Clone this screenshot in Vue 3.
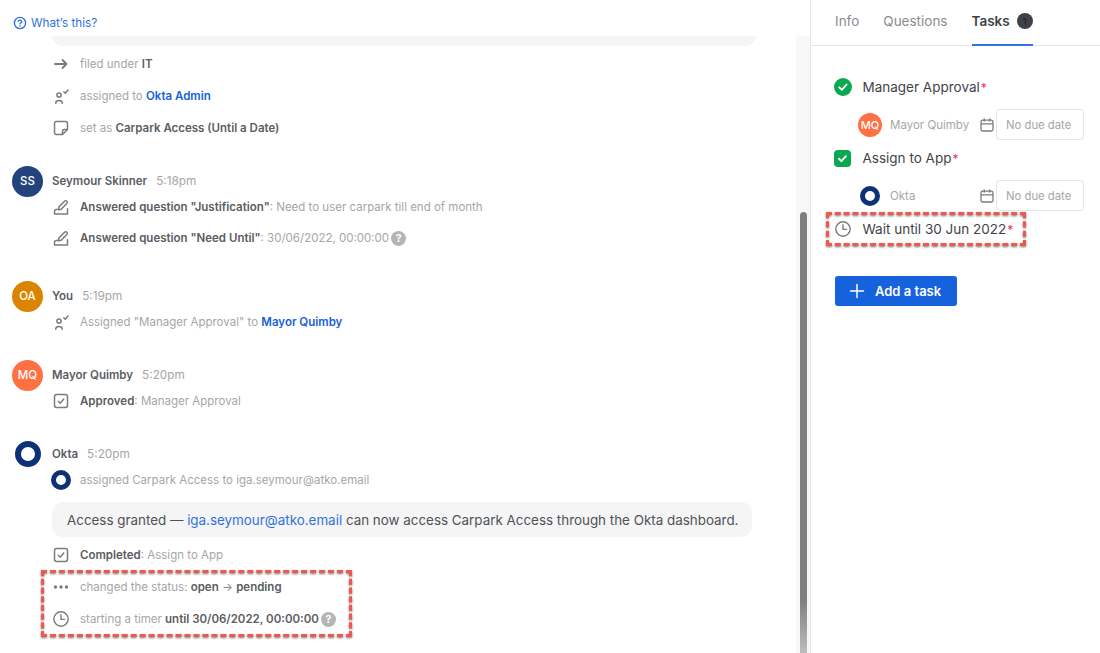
<script setup>
const tabs = [
  { label: 'Info', active: false },
  { label: 'Questions', active: false },
  { label: 'Tasks', active: true }
]
</script>

<template>
  <div class="app">
    <svg class="defs" aria-hidden="true">
      <symbol id="i-arrow" viewBox="0 0 18 18"><path d="M3 9h11.500M10.500 5l4 4-4 4" fill="none" stroke="currentColor" stroke-width="1.800" stroke-linecap="round" stroke-linejoin="round"/></symbol>
      <symbol id="i-assign" viewBox="0 0 18 18"><g fill="none" stroke="currentColor" stroke-linecap="round" stroke-linejoin="round" stroke-width="1.500"><circle cx="7" cy="8" r="2.100"/><path d="M3.800 16.200v-.4c0-1.500 1.400-2.400 3.200-2.400s3.200.9 3.200 2.400v.4M11.800 4.700l1.500 1.500 2.700-3.200"/></g></symbol>
      <symbol id="i-note" viewBox="0 0 18 18"><path d="M2.500 4.200c0-1 .8-1.700 1.700-1.700h9.600c1 0 1.700.8 1.700 1.700v6.300l-5 5H4.200c-1 0-1.700-.8-1.700-1.700zM10.500 15.500v-3.400c0-.9.7-1.600 1.600-1.600h3.400" fill="none" stroke="currentColor" stroke-width="1.500" stroke-linejoin="round"/></symbol>
      <symbol id="i-edit" viewBox="0 0 18 18"><path d="M2.500 16h13M2.500 16v-2.600c0-1 .8-1.800 1.800-1.800h1.900M6.400 11.800l.5-2.800 5.600-5.800c.7-.7 1.700-.7 2.300 0 .7.7.7 1.600 0 2.300l-5.600 5.800zM15.500 16v-5.200" fill="none" stroke="currentColor" stroke-width="1.500" stroke-linecap="round" stroke-linejoin="round"/></symbol>
      <symbol id="i-check" viewBox="0 0 18 18"><rect x="2.500" y="2.500" width="13" height="13" rx="2.200" fill="none" stroke="currentColor" stroke-width="1.500"/><path d="M6.200 9.200l2 2 3.600-4.200" fill="none" stroke="currentColor" stroke-width="1.400" stroke-linecap="round" stroke-linejoin="round"/></symbol>
      <symbol id="i-clock" viewBox="0 0 18 18"><circle cx="9" cy="9" r="7.200" fill="none" stroke="currentColor" stroke-width="1.400"/><path d="M9 4.800V9.400h3.600" fill="none" stroke="currentColor" stroke-width="1.400" stroke-linecap="round" stroke-linejoin="round"/></symbol>
      <symbol id="i-dots" viewBox="0 0 18 18"><circle cx="3.500" cy="9" r="1.700" fill="currentColor"/><circle cx="9" cy="9" r="1.700" fill="currentColor"/><circle cx="14.500" cy="9" r="1.700" fill="currentColor"/></symbol>
      <symbol id="i-cal" viewBox="0 0 16 16"><path d="M2 5c0-1 .7-1.800 1.700-1.800h8.600c1 0 1.700.8 1.700 1.800v7.300c0 1-.7 1.700-1.700 1.700H3.700c-1 0-1.700-.7-1.700-1.700zM2 6.800h12M5.200 1.800v2.400M10.800 1.800v2.400" fill="none" stroke="currentColor" stroke-width="1.300" stroke-linecap="round"/></symbol>
    </svg>

    <section class="left">
      <div class="help">
        <svg class="help-icon" viewBox="0 0 14 14"><circle cx="7" cy="7" r="5.600" fill="none" stroke="currentColor" stroke-width="1.400"/><path d="M5.300 5.600c0-1 .8-1.500 1.700-1.500s1.700.6 1.700 1.400c0 1.300-1.700 1.300-1.700 2.600" fill="none" stroke="currentColor" stroke-width="1.300" stroke-linecap="round"/><circle cx="7" cy="10" r=".8" fill="currentColor"/></svg>
        <span>What’s this?</span>
      </div>
      <div class="body">
        <div class="feed">
          <div class="bubble-end"></div>
          <div class="row"><svg class="ico"><use href="#i-arrow"/></svg><p>filed under <b>IT</b></p></div>
          <div class="row"><svg class="ico"><use href="#i-assign"/></svg><p>assigned to <a>Okta Admin</a></p></div>
          <div class="row"><svg class="ico"><use href="#i-note"/></svg><p>set as <b>Carpark Access (Until a Date)</b></p></div>

          <div class="group">
            <div class="head"><span class="avatar navy">SS</span><strong>Seymour Skinner</strong><time>5:18pm</time></div>
            <div class="row"><svg class="ico"><use href="#i-edit"/></svg><p><b>Answered question "Justification"</b>: Need to user carpark till end of month</p></div>
            <div class="row lift"><svg class="ico"><use href="#i-edit"/></svg><p><b>Answered question "Need Until"</b>: 30/06/2022, 00:00:00</p><span class="q">?</span></div>
          </div>

          <div class="group roomy">
            <div class="head"><span class="avatar amber">OA</span><strong>You</strong><time>5:19pm</time></div>
            <div class="row"><svg class="ico"><use href="#i-assign"/></svg><p>Assigned "Manager Approval" to <a>Mayor Quimby</a></p></div>
          </div>

          <div class="group">
            <div class="head"><span class="avatar coral">MQ</span><strong>Mayor Quimby</strong><time>5:20pm</time></div>
            <div class="row"><svg class="ico"><use href="#i-check"/></svg><p><b>Approved</b>: Manager Approval</p></div>
          </div>

          <div class="group">
            <div class="head"><span class="avatar-slot"><span class="ring big"></span></span><strong>Okta</strong><time>5:20pm</time></div>
            <div class="row"><span class="ico-slot"><span class="ring small"></span></span><p>assigned Carpark Access to iga.seymour@atko.email</p></div>
            <div class="bubble">Access granted — <a class="plain">iga.seymour@atko.email</a> can now access Carpark Access through the Okta dashboard.</div>
            <div class="row"><svg class="ico"><use href="#i-check"/></svg><p><b>Completed</b>: Assign to App</p></div>
            <div class="mark mark-left">
              <div class="row"><svg class="ico"><use href="#i-dots"/></svg><p>changed the status: <b>open</b> <span class="arr">→</span> <b>pending</b></p></div>
              <div class="row"><svg class="ico"><use href="#i-clock"/></svg><p>starting a timer <b>until 30/06/2022, 00:00:00</b></p><span class="q">?</span></div>
            </div>
          </div>
        </div>
        <div class="track"><div class="thumb"></div></div>
      </div>
    </section>

    <aside class="right">
      <nav class="tabs">
        <div v-for="t in tabs" :key="t.label" class="tab" :class="{ active: t.active }">
          <span>{{ t.label }}</span>
          <span v-if="t.active" class="badge">1</span>
        </div>
      </nav>
      <div class="tasks">
        <div class="task">
          <span class="done round"><svg viewBox="0 0 18 18"><path d="M5.300 9.300l2.500 2.500 4.800-5.300" fill="none" stroke="#fff" stroke-width="1.800" stroke-linecap="round" stroke-linejoin="round"/></svg></span>
          <span class="title">Manager Approval<i>*</i></span>
        </div>
        <div class="sub">
          <span class="sub-av"><span class="avatar coral mini">MQ</span></span>
          <span class="who">Mayor Quimby</span>
          <svg class="cal"><use href="#i-cal"/></svg>
          <span class="due">No due date</span>
        </div>
        <div class="task tight">
          <span class="done square"><svg viewBox="0 0 18 18"><path d="M5.300 9.300l2.500 2.500 4.800-5.300" fill="none" stroke="#fff" stroke-width="2" stroke-linecap="round" stroke-linejoin="round"/></svg></span>
          <span class="title">Assign to App<i>*</i></span>
        </div>
        <div class="sub">
          <span class="sub-av"><span class="ring task-ring"></span></span>
          <span class="who">Okta</span>
          <svg class="cal"><use href="#i-cal"/></svg>
          <span class="due">No due date</span>
        </div>
        <div class="task tight mark mark-right">
          <svg class="task-clock"><use href="#i-clock"/></svg>
          <span class="title">Wait until 30 Jun 2022<i>*</i></span>
        </div>
        <button class="add" type="button">
          <svg viewBox="0 0 16 16"><path d="M8 1.500v13M1.500 8h13" stroke="#fff" stroke-width="1.500" stroke-linecap="round"/></svg>
          <span>Add a task</span>
        </button>
      </div>
    </aside>
  </div>
</template>

<style>
html, body { margin: 0; background: #fff; }
</style>

<style scoped>
.app {
  display: flex;
  width: 1100px;
  height: 653px;
  overflow: hidden;
  background: #fff;
  font-family: Inter, "Liberation Sans", sans-serif;
  color: #4b4f55;
}
.defs { position: absolute; width: 0; height: 0; }
.left { width: 810px; display: flex; flex-direction: column; flex: none; }
.help {
  height: 36px;
  flex: none;
  display: flex;
  align-items: center;
  gap: 4px;
  padding: 10px 0 0 13px;
  box-sizing: border-box;
  color: #2f72e0;
  font-size: 11.7px;
}
.help-icon { width: 14px; height: 14px; }
.body { flex: 1; display: flex; min-height: 0; }
.feed { flex: 1; padding-left: 12px; min-width: 0; }
.track { width: 14px; background: #f8f8f8; padding-top: 176px; box-sizing: border-box; flex: none; }
.thumb {
  width: 7px;
  height: 441px;
  margin-left: 4px;
  border-radius: 4px 4px 0 0;
  background: linear-gradient(#7f7f7f 0, #7f7f7f 88%, #bdbdbd 100%);
}
.bubble-end {
  width: 704px;
  height: 10px;
  margin-left: 40px;
  margin-bottom: 2px;
  background: #f5f5f5;
  border-radius: 0 0 11px 11px;
}
.row {
  height: 32px;
  display: flex;
  align-items: center;
  padding-left: 40px;
  font-size: 11.5px;
  color: #a6a6a6;
}
.row.lift { margin-top: -1px; }
.row p { margin: 0; white-space: nowrap; }
.row b { font-weight: 600; color: #5a5d61; }
.row a { font-weight: 600; color: #1662dd; }
.ico { width: 18px; height: 18px; margin-right: 10px; color: #7b7b7b; flex: none; }
.ico-slot { width: 18px; margin-right: 10px; display: flex; justify-content: center; flex: none; }
.group { margin-top: 21px; }
.group.roomy { margin-top: 26px; }
.head {
  height: 32px;
  display: flex;
  align-items: center;
  margin-bottom: -6px;
  font-size: 11.5px;
}
.head strong { margin-left: 9px; font-weight: 600; color: #5a5d61; }
.head time { margin-left: 9px; color: #a6a6a6; font-size: 11.8px; }
.avatar {
  width: 31px;
  height: 31px;
  border-radius: 50%;
  display: flex;
  align-items: center;
  justify-content: center;
  color: #fff;
  font-size: 11.5px;
  font-weight: 500;
  flex: none;
}
.avatar-slot { width: 31px; display: flex; justify-content: center; flex: none; }
.navy { background: #24437c; }
.amber { background: #dc8400; }
.coral { background: #ff7043; }
.ring { display: block; border-radius: 50%; border-style: solid; border-color: #0d3177; box-sizing: border-box; background: #fff; flex: none; }
.ring.big { width: 26px; height: 26px; border-width: 6.5px; }
.ring.small { width: 20px; height: 20px; border-width: 5px; }
.ring.task-ring { width: 20px; height: 20px; border-width: 5px; }
.q {
  width: 15px;
  height: 15px;
  margin-left: 2px;
  border-radius: 50%;
  background: #b5b5b5;
  color: #fff;
  font-size: 10.5px;
  font-weight: 700;
  display: flex;
  align-items: center;
  justify-content: center;
  flex: none;
}
.bubble {
  width: 700px;
  height: 35px;
  margin: 6px 0 2px 40px;
  padding-left: 15px;
  box-sizing: border-box;
  background: #f5f5f5;
  border-radius: 11px;
  display: flex;
  align-items: center;
  white-space: pre;
  font-size: 13.4px;
  color: #4f5256;
}
.plain { color: #2f72e0; }
.arr { color: #8f8f8f; }
.mark { position: relative; }
.mark::before {
  content: "";
  position: absolute;
  border: 3px dashed #f0584c;
  filter: drop-shadow(0 1px 1px rgba(0, 0, 0, .55));
  pointer-events: none;
}
.mark-left { width: 300px; margin-left: 40px; }
.mark-left .row { padding-left: 0; }
.mark-left::before { top: -1px; bottom: -2px; left: -11px; right: 0; }
.right {
  flex: 1;
  border-left: 1px solid #e4e6ea;
  min-width: 0;
}
.tabs {
  height: 45px;
  display: flex;
  gap: 24px;
  padding-left: 24px;
  border-bottom: 1px solid #e4e6ea;
}
.tab {
  display: flex;
  align-items: center;
  gap: 7px;
  height: 42px;
  font-size: 13.5px;
  color: #8a8d91;
}
.tab.active {
  color: #3c4045;
  font-weight: 600;
  height: 46px;
  padding-bottom: 2px;
  box-sizing: border-box;
  border-bottom: 2px solid #2f72e0;
  align-self: flex-start;
}
.badge {
  width: 16px;
  height: 16px;
  border-radius: 50%;
  background: #3e4247;
  color: #222;
  font-size: 9px;
  font-weight: 500;
  display: flex;
  align-items: center;
  justify-content: center;
}
.tasks { padding: 25px 0 0 23px; }
.task { height: 32px; display: flex; align-items: center; margin-bottom: 6px; }
.task.tight { margin-top: 1px; }
.done { width: 18px; height: 18px; background: #0aa84f; flex: none; display: block; }
.done svg { width: 18px; height: 18px; display: block; }
.round { border-radius: 50%; }
.square { border-radius: 4px; width: 17px; height: 17px; margin-right: 1px; }
.square svg { width: 17px; height: 17px; }
.title { margin-left: 10.5px; font-size: 13.5px; color: #3f4348; white-space: nowrap; }
.title i { color: #e8344e; font-style: normal; margin-left: 1px; font-size: 12px; }
.task-clock { width: 18px; height: 18px; color: #7b7b7b; flex: none; }
.sub { height: 32px; display: flex; align-items: center; padding-left: 24px; font-size: 11.5px; color: #a6a6a6; }
.sub-av { width: 24px; display: flex; justify-content: center; flex: none; }
.avatar.mini { width: 24px; height: 24px; font-size: 11px; }
.who { margin-left: 8px; width: 90px; white-space: nowrap; }
.cal { width: 16px; height: 16px; color: #7b7b7b; flex: none; margin-left: -1px; margin-right: 1px; }
.due {
  width: 88px;
  height: 31px;
  align-self: flex-start;
  border: 1px solid #e6e6e6;
  border-radius: 4px;
  box-sizing: border-box;
  display: flex;
  align-items: center;
  padding-left: 9px;
  font-size: 11.3px;
  color: #a6a6a6;
  flex: none;
}
.mark-right { width: 192px; margin-bottom: 0; }
.mark-right::before { top: -1px; bottom: -1px; left: -8px; right: 0; }
.add {
  margin: 31px 0 0 1px;
  width: 122px;
  height: 30px;
  background: #1662dd;
  border: none;
  border-radius: 3px;
  color: #fff;
  font: 600 13px Inter, "Liberation Sans", sans-serif;
  display: flex;
  align-items: center;
  gap: 10px;
  padding: 0 0 0 14px;
}
.add svg { width: 16px; height: 16px; flex: none; }
</style>
